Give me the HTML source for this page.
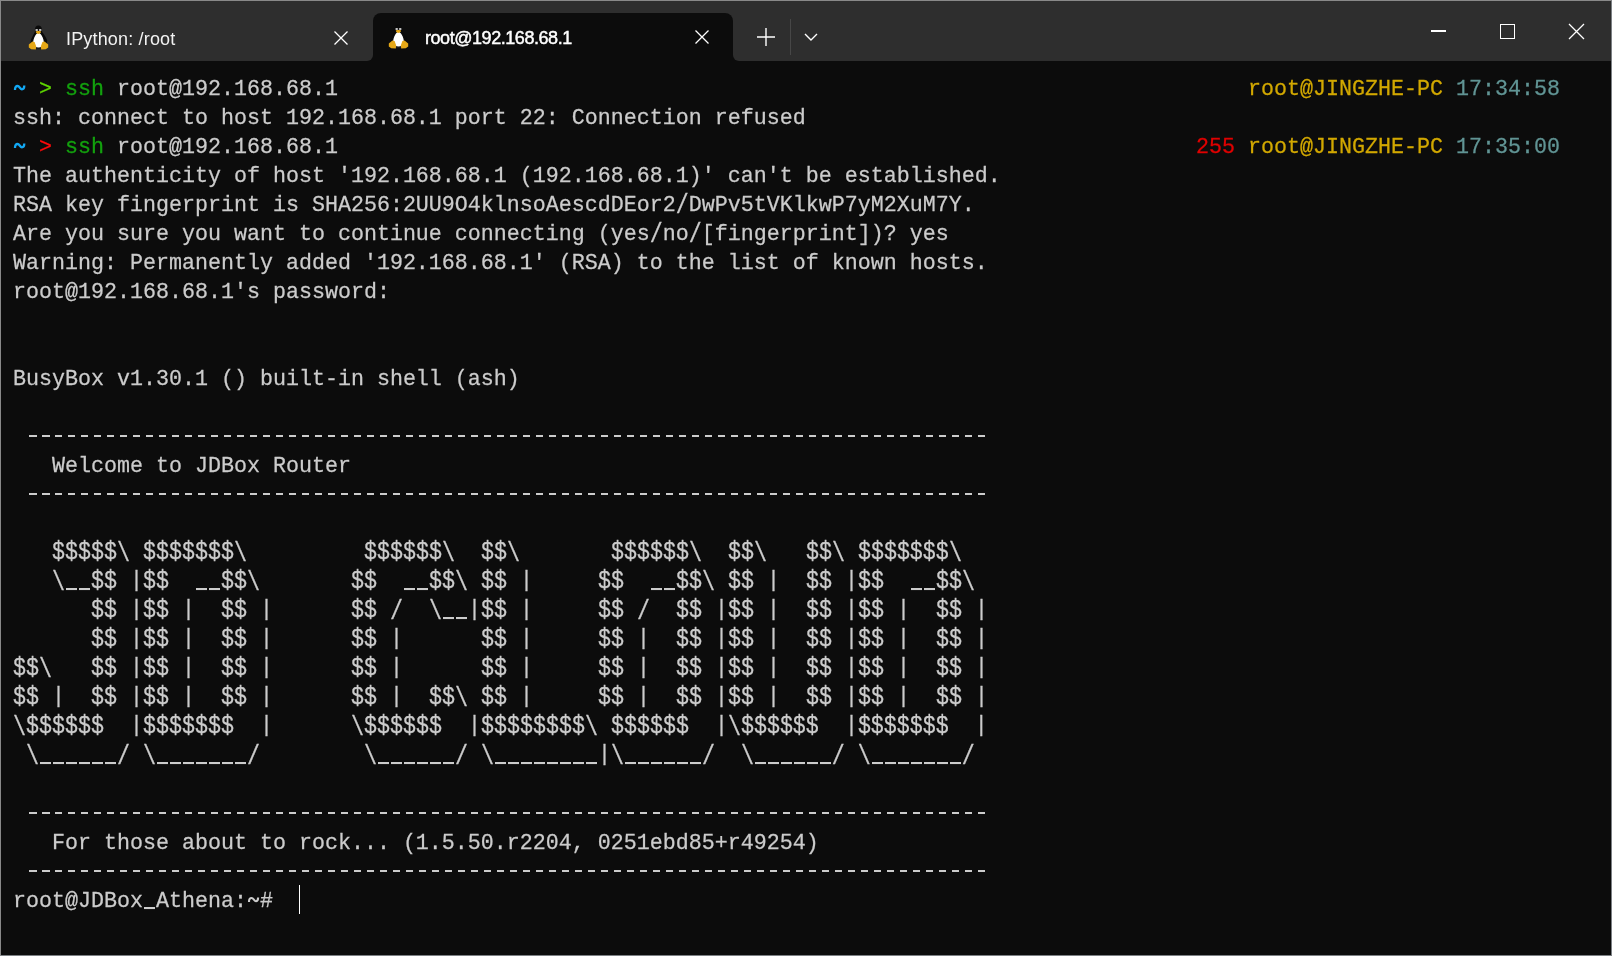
<!DOCTYPE html>
<html><head><meta charset="utf-8"><style>
html,body{margin:0;padding:0}
body{width:1612px;height:956px;position:relative;overflow:hidden;background:#0c0c0c;font-family:"Liberation Mono",monospace}
.tabbar{position:absolute;left:0;top:0;width:1612px;height:61px;background:#2e2e2e}
.atab{position:absolute;left:373px;top:13px;width:360px;height:48px;background:#0c0c0c;border-radius:8px 8px 0 0}
.ear{position:absolute;top:49px;width:12px;height:12px;background:#0c0c0c}
.ear i{position:absolute;left:0;top:0;width:12px;height:12px;background:#2e2e2e}
.r{position:absolute;left:13px;height:29px;line-height:29px;font-size:21.667px;color:#cccccc;white-space:pre;-webkit-font-smoothing:antialiased;will-change:transform;transform:scaleY(1.03);transform-origin:0 20px;-webkit-text-stroke:0.25px}
.cb{color:transparent}.cg2{color:#5fd700}.cg{color:#13a10e}.cr2{color:#ff0a0a}.cr{color:#e00000}.cy{color:#d2a800}.ct{color:#619595}
.dash{position:absolute;left:29px;width:957px;height:2px;background:repeating-linear-gradient(90deg,#cccccc 0,#cccccc 7.5px,transparent 7.5px,transparent 13px)}
.u{color:transparent;background:repeating-linear-gradient(90deg,transparent 0,transparent 1px,#cccccc 1px,#cccccc 12px,transparent 12px,transparent 13px) no-repeat 0 17.8px/100% 2px}
.d{display:inline-block;transform:translateY(-0.8px) scaleY(1.16);transform-origin:0 13px}
.p{display:inline-block;transform:translateY(-2px)}
.sl{display:inline-block;transform:scaleY(1.26);transform-origin:0 12px}
.ttl{position:absolute;top:26px;font-family:"Liberation Sans",sans-serif;font-size:18px;color:#fff;white-space:pre;line-height:26px;will-change:transform}
.ico{position:absolute}
.border{position:absolute;left:0;top:0;width:1610px;height:954px;border:1px solid #898989;border-right-color:#7c8084;border-bottom-color:#7c8084;pointer-events:none}
</style></head><body>
<div class="tabbar"></div>
<div class="atab"></div>
<div class="ear" style="left:361px"><i style="border-bottom-right-radius:6px"></i></div>
<div class="ear" style="left:733px"><i style="border-bottom-left-radius:6px"></i></div>
<div class="ico" style="left:24px;top:20px"><svg width="30" height="34" viewBox="0 0 30 34">
<path d="M14.4 5.6C12.1 5.6 10.9 7.4 10.9 9.8L10.9 12C9.8 14.2 7.6 17.6 6.8 20.6L6.4 25L22.6 25L23.2 20.6C22.3 17.6 19.9 14.2 18.1 12L18 9.8C18 7.4 16.7 5.6 14.4 5.6Z" fill="#0a0a0a"/>
<path d="M10 25.5L19 25.5L18.6 29.2L10.4 29.2Z" fill="#1a1a1a"/>
<path d="M14.5 12.8C12.8 12.8 11.4 15 10.3 17.6C9.2 20.2 8.9 22.8 9.4 24.8C10 26.8 12.3 27.4 14.5 27.4C16.7 27.4 19 26.8 19.6 24.8C20.1 22.8 19.8 20.2 18.7 17.6C17.6 15 16.2 12.8 14.5 12.8Z" fill="#fff"/>
<ellipse cx="12.7" cy="10" rx="1.4" ry="1.1" fill="#cfcfcf"/><ellipse cx="16.2" cy="10" rx="1.4" ry="1.1" fill="#cfcfcf"/>
<path d="M11.7 11.7C12.7 10.9 16.1 10.9 17.1 11.7C16.7 13.1 15.5 13.9 14.4 13.9C13.3 13.9 12.1 13.1 11.7 11.7Z" fill="#e6a817"/>
<path d="M4.8 24.6L8.4 21.6L10.6 22L12.2 26.6L11.8 29.4L7.2 29.2L4.8 27.6Z" fill="#e6a817"/>
<path d="M24.2 24.6L20.6 21.6L18.4 22L16.8 26.6L17.2 29.4L21.8 29.2L24.2 27.6Z" fill="#e6a817"/>
</svg></div>
<div class="ttl" style="left:66px;letter-spacing:0.17px;color:#f2f2f2">IPython: /root</div>
<div class="ico" style="left:333px;top:30px"><svg width="16" height="16" viewBox="0 0 16 16"><path d="M1.5 1.5L14.5 14.5M14.5 1.5L1.5 14.5" stroke="#fff" stroke-width="1.3"/></svg></div>
<div class="ico" style="left:384px;top:19px"><svg width="30" height="34" viewBox="0 0 30 34">
<path d="M14.4 5.6C12.1 5.6 10.9 7.4 10.9 9.8L10.9 12C9.8 14.2 7.6 17.6 6.8 20.6L6.4 25L22.6 25L23.2 20.6C22.3 17.6 19.9 14.2 18.1 12L18 9.8C18 7.4 16.7 5.6 14.4 5.6Z" fill="#0a0a0a"/>
<path d="M10 25.5L19 25.5L18.6 29.2L10.4 29.2Z" fill="#1a1a1a"/>
<path d="M14.5 12.8C12.8 12.8 11.4 15 10.3 17.6C9.2 20.2 8.9 22.8 9.4 24.8C10 26.8 12.3 27.4 14.5 27.4C16.7 27.4 19 26.8 19.6 24.8C20.1 22.8 19.8 20.2 18.7 17.6C17.6 15 16.2 12.8 14.5 12.8Z" fill="#fff"/>
<ellipse cx="12.7" cy="10" rx="1.4" ry="1.1" fill="#cfcfcf"/><ellipse cx="16.2" cy="10" rx="1.4" ry="1.1" fill="#cfcfcf"/>
<path d="M11.7 11.7C12.7 10.9 16.1 10.9 17.1 11.7C16.7 13.1 15.5 13.9 14.4 13.9C13.3 13.9 12.1 13.1 11.7 11.7Z" fill="#e6a817"/>
<path d="M4.8 24.6L8.4 21.6L10.6 22L12.2 26.6L11.8 29.4L7.2 29.2L4.8 27.6Z" fill="#e6a817"/>
<path d="M24.2 24.6L20.6 21.6L18.4 22L16.8 26.6L17.2 29.4L21.8 29.2L24.2 27.6Z" fill="#e6a817"/>
</svg></div>
<div class="ttl" style="left:425px;top:25px;letter-spacing:-0.45px;-webkit-text-stroke:0.45px #fff">root@192.168.68.1</div>
<div class="ico" style="left:693.5px;top:29px"><svg width="16" height="16" viewBox="0 0 16 16"><path d="M1.5 1.5L14.5 14.5M14.5 1.5L1.5 14.5" stroke="#fff" stroke-width="1.3"/></svg></div>
<svg class="ico" style="left:756px;top:27px" width="20" height="20" viewBox="0 0 20 20"><path d="M10 1V19M1 10H19" stroke="#fff" stroke-width="1.4"/></svg>
<div class="ico" style="left:789.5px;top:19px;width:1px;height:36px;background:#474747"></div>
<svg class="ico" style="left:803px;top:32px" width="16" height="10" viewBox="0 0 16 10"><path d="M2 2L8 8L14 2" stroke="#fff" stroke-width="1.4" fill="none"/></svg>
<div class="ico" style="left:1431px;top:30px;width:15px;height:1.5px;background:#fff"></div>
<div class="ico" style="left:1500px;top:24px;width:13px;height:13px;border:1px solid #fff"></div>
<svg class="ico" style="left:1568px;top:23px" width="17" height="17" viewBox="0 0 17 17"><path d="M1 1L16 16M16 1L1 16" stroke="#fff" stroke-width="1.3"/></svg>
<div class="r" style="top:75px"><span class="cb">~</span> <span class="cg2">&gt;</span> <span class="cg">ssh</span> root@192.168.68.1</div>
<div class="r" style="top:104px">ssh: connect to host 192.168.68.1 port 22: Connection refused</div>
<div class="r" style="top:133px"><span class="cb">~</span> <span class="cr2">&gt;</span> <span class="cg">ssh</span> root@192.168.68.1</div>
<div class="r" style="top:162px">The authenticity of host &#x27;192.168.68.1 (192.168.68.1)&#x27; can&#x27;t be established.</div>
<div class="r" style="top:191px">RSA key fingerprint is SHA256:2UU9O4klnsoAescdDEor2<span class="sl">/</span>DwPv5tVKlkwP7yM2XuM7Y.</div>
<div class="r" style="top:220px">Are you sure you want to continue connecting (yes<span class="sl">/</span>no<span class="sl">/</span>[fingerprint])? yes</div>
<div class="r" style="top:249px">Warning: Permanently added &#x27;192.168.68.1&#x27; (RSA) to the list of known hosts.</div>
<div class="r" style="top:278px">root@192.168.68.1&#x27;s password:</div>
<div class="r" style="top:365px">BusyBox v1.30.1 () built-in shell (ash)</div>
<div class="r" style="top:452px">   Welcome to JDBox Router</div>
<div class="r" style="top:539px">   <span class="d">$$$$$</span><span class="sl">\</span> <span class="d">$$$$$$$</span><span class="sl">\</span>         <span class="d">$$$$$$</span><span class="sl">\</span>  <span class="d">$$</span><span class="sl">\</span>       <span class="d">$$$$$$</span><span class="sl">\</span>  <span class="d">$$</span><span class="sl">\</span>   <span class="d">$$</span><span class="sl">\</span> <span class="d">$$$$$$$</span><span class="sl">\</span></div>
<div class="r" style="top:568px">   <span class="sl">\</span><span class="u">__</span><span class="d">$$</span> <span class="p">|</span><span class="d">$$</span>  <span class="u">__</span><span class="d">$$</span><span class="sl">\</span>       <span class="d">$$</span>  <span class="u">__</span><span class="d">$$</span><span class="sl">\</span> <span class="d">$$</span> <span class="p">|</span>     <span class="d">$$</span>  <span class="u">__</span><span class="d">$$</span><span class="sl">\</span> <span class="d">$$</span> <span class="p">|</span>  <span class="d">$$</span> <span class="p">|</span><span class="d">$$</span>  <span class="u">__</span><span class="d">$$</span><span class="sl">\</span></div>
<div class="r" style="top:597px">      <span class="d">$$</span> <span class="p">|</span><span class="d">$$</span> <span class="p">|</span>  <span class="d">$$</span> <span class="p">|</span>      <span class="d">$$</span> <span class="sl">/</span>  <span class="sl">\</span><span class="u">__</span><span class="p">|</span><span class="d">$$</span> <span class="p">|</span>     <span class="d">$$</span> <span class="sl">/</span>  <span class="d">$$</span> <span class="p">|</span><span class="d">$$</span> <span class="p">|</span>  <span class="d">$$</span> <span class="p">|</span><span class="d">$$</span> <span class="p">|</span>  <span class="d">$$</span> <span class="p">|</span></div>
<div class="r" style="top:626px">      <span class="d">$$</span> <span class="p">|</span><span class="d">$$</span> <span class="p">|</span>  <span class="d">$$</span> <span class="p">|</span>      <span class="d">$$</span> <span class="p">|</span>      <span class="d">$$</span> <span class="p">|</span>     <span class="d">$$</span> <span class="p">|</span>  <span class="d">$$</span> <span class="p">|</span><span class="d">$$</span> <span class="p">|</span>  <span class="d">$$</span> <span class="p">|</span><span class="d">$$</span> <span class="p">|</span>  <span class="d">$$</span> <span class="p">|</span></div>
<div class="r" style="top:655px"><span class="d">$$</span><span class="sl">\</span>   <span class="d">$$</span> <span class="p">|</span><span class="d">$$</span> <span class="p">|</span>  <span class="d">$$</span> <span class="p">|</span>      <span class="d">$$</span> <span class="p">|</span>      <span class="d">$$</span> <span class="p">|</span>     <span class="d">$$</span> <span class="p">|</span>  <span class="d">$$</span> <span class="p">|</span><span class="d">$$</span> <span class="p">|</span>  <span class="d">$$</span> <span class="p">|</span><span class="d">$$</span> <span class="p">|</span>  <span class="d">$$</span> <span class="p">|</span></div>
<div class="r" style="top:684px"><span class="d">$$</span> <span class="p">|</span>  <span class="d">$$</span> <span class="p">|</span><span class="d">$$</span> <span class="p">|</span>  <span class="d">$$</span> <span class="p">|</span>      <span class="d">$$</span> <span class="p">|</span>  <span class="d">$$</span><span class="sl">\</span> <span class="d">$$</span> <span class="p">|</span>     <span class="d">$$</span> <span class="p">|</span>  <span class="d">$$</span> <span class="p">|</span><span class="d">$$</span> <span class="p">|</span>  <span class="d">$$</span> <span class="p">|</span><span class="d">$$</span> <span class="p">|</span>  <span class="d">$$</span> <span class="p">|</span></div>
<div class="r" style="top:713px"><span class="sl">\</span><span class="d">$$$$$$</span>  <span class="p">|</span><span class="d">$$$$$$$</span>  <span class="p">|</span>      <span class="sl">\</span><span class="d">$$$$$$</span>  <span class="p">|</span><span class="d">$$$$$$$$</span><span class="sl">\</span> <span class="d">$$$$$$</span>  <span class="p">|</span><span class="sl">\</span><span class="d">$$$$$$</span>  <span class="p">|</span><span class="d">$$$$$$$</span>  <span class="p">|</span></div>
<div class="r" style="top:742px"> <span class="sl">\</span><span class="u">______</span><span class="sl">/</span> <span class="sl">\</span><span class="u">_______</span><span class="sl">/</span>        <span class="sl">\</span><span class="u">______</span><span class="sl">/</span> <span class="sl">\</span><span class="u">________</span><span class="p">|</span><span class="sl">\</span><span class="u">______</span><span class="sl">/</span>  <span class="sl">\</span><span class="u">______</span><span class="sl">/</span> <span class="sl">\</span><span class="u">_______</span><span class="sl">/</span></div>
<div class="r" style="top:829px">   For those about to rock... (1.5.50.r2204, 0251ebd85+r49254)</div>
<div class="r" style="top:887px">root@JDBox<span class="u">_</span>Athena:<span class="cb">~</span>#</div>
<svg class="ico" style="left:12px;top:80px" width="16" height="14" viewBox="0 0 16 14"><path d="M3 10C2.8 7.3 4.1 6 5.6 6C7.5 6 8.2 9.3 9.9 9.3C11.3 9.3 12.3 8.3 12.3 5.6" stroke="#12a8f4" stroke-width="2.3" fill="none"/></svg>
<svg class="ico" style="left:12px;top:138px" width="16" height="14" viewBox="0 0 16 14"><path d="M3 10C2.8 7.3 4.1 6 5.6 6C7.5 6 8.2 9.3 9.9 9.3C11.3 9.3 12.3 8.3 12.3 5.6" stroke="#12a8f4" stroke-width="2.3" fill="none"/></svg>
<svg class="ico" style="left:246px;top:892px" width="16" height="14" viewBox="0 0 16 14"><path d="M3 10C2.8 7.3 4.1 6 5.6 6C7.5 6 8.2 9.3 9.9 9.3C11.3 9.3 12.1 8.3 12.1 5.6" stroke="#cccccc" stroke-width="2.1" fill="none"/></svg>
<div class="dash" style="top:435px"></div>
<div class="dash" style="top:493px"></div>
<div class="dash" style="top:812px"></div>
<div class="dash" style="top:870px"></div>
<div class="r" style="top:75px;left:1248px"><span class="cy">root@JINGZHE-PC</span> <span class="ct">17:34:58</span></div>
<div class="r" style="top:133px;left:1196px"><span class="cr">255</span> <span class="cy">root@JINGZHE-PC</span> <span class="ct">17:35:00</span></div>
<div class="ico" style="left:299px;top:885px;width:1.4px;height:29px;background:#fff"></div>
<div class="border"></div>
</body></html>
